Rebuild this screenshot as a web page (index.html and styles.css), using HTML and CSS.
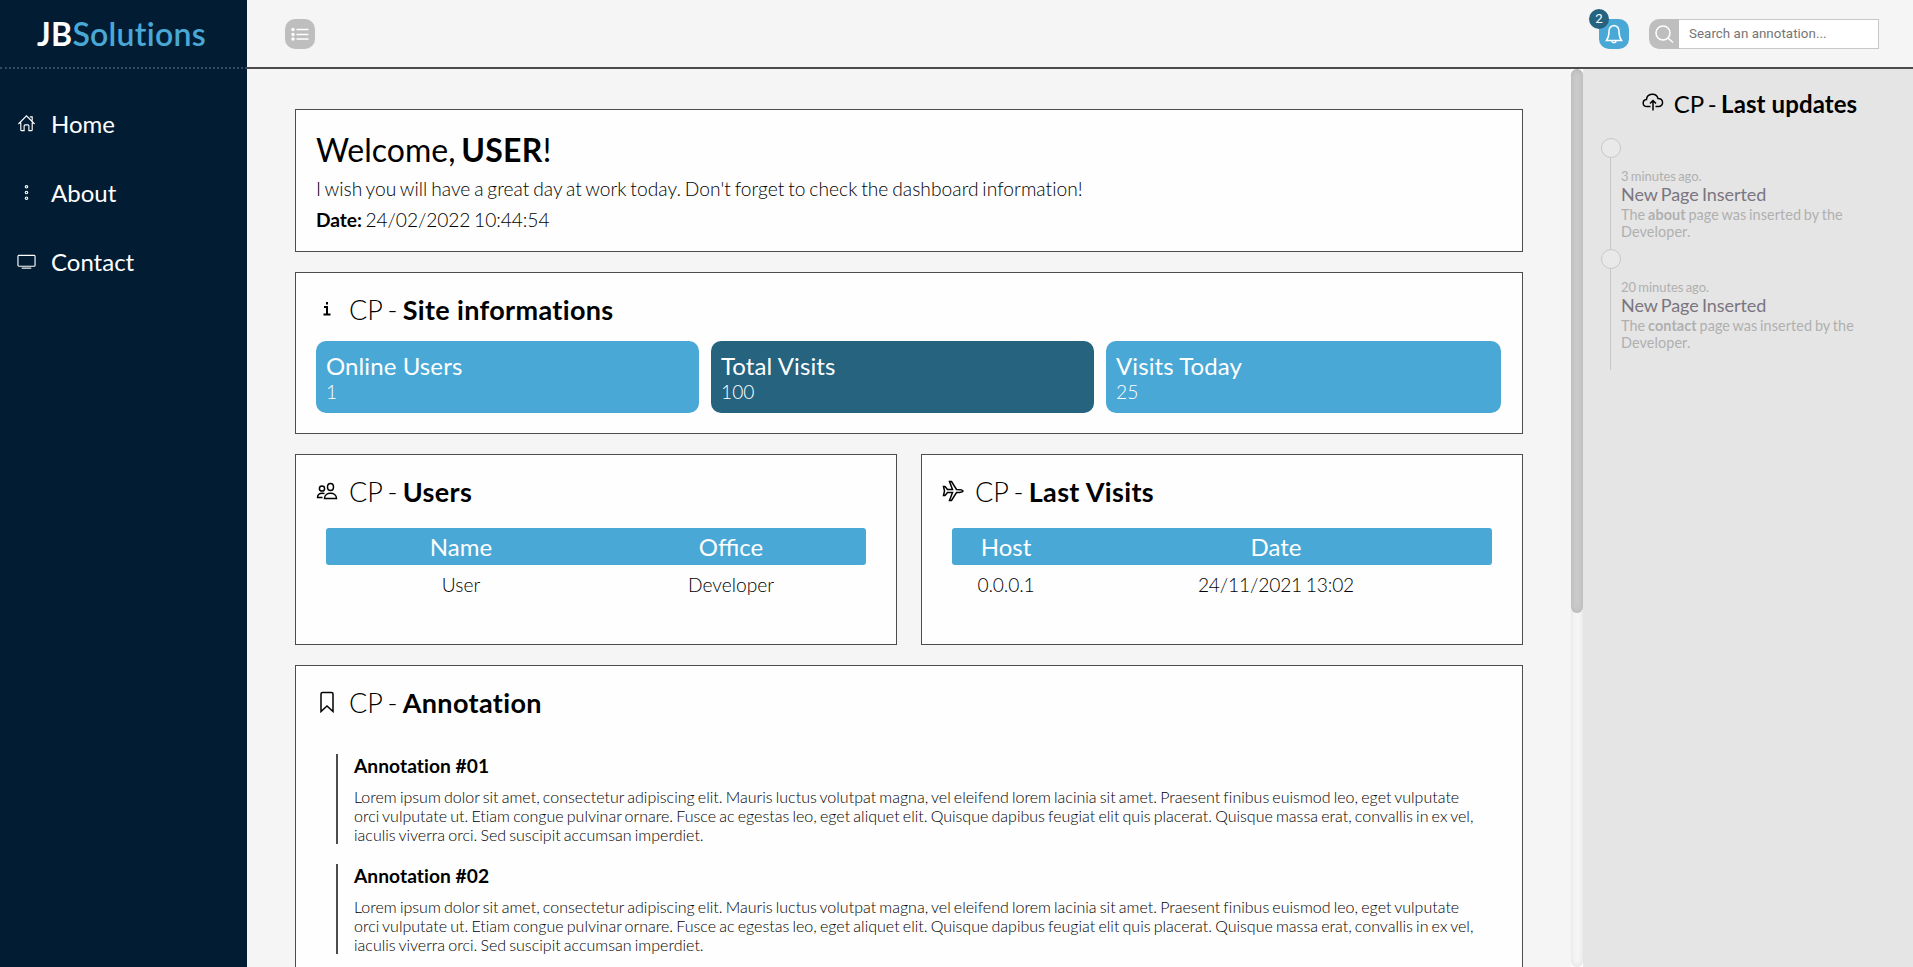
FILE: index.html
```html
<!DOCTYPE html>
<html lang="en">
<head>
<meta charset="utf-8">
<title>JBSolutions - Control Panel</title>
<link rel="stylesheet" href="styles.css">
</head>
<body>
<div class="app">
  <aside class="sidebar">
    <div class="logo"><b>JB</b><span>Solutions</span></div>
    <nav class="nav">
      <a class="nav-item"><svg class="nav-icon" viewBox="0 0 20 20"><path d="M1.500 10.500 10 2l8.500 8.500M4 9v7.500q0 1 1 1h2.500v-5q0-1 1-1h3q1 0 1 1v5H15q1 0 1-1V9M13.500 3H16v4"/></svg>Home</a>
      <a class="nav-item"><svg class="nav-icon" viewBox="0 0 20 20"><circle cx="10" cy="4" r="1.300"/><circle cx="10" cy="10" r="1.300"/><circle cx="10" cy="16" r="1.300"/></svg>About</a>
      <a class="nav-item"><svg class="nav-icon" viewBox="0 0 20 20"><rect x="1" y="3.500" width="18" height="11.500" rx="1"/><path d="M5 17h10"/></svg>Contact</a>
    </nav>
  </aside>
  <div class="page">
    <header class="topbar">
      <button class="square menu"><svg viewBox="0 0 30 30"><circle class="bullet" cx="8" cy="10.500" r="1"/><circle class="bullet" cx="8" cy="15.500" r="1"/><circle class="bullet" cx="8" cy="20" r="1"/><path d="M11.500 10.500h12M11.500 15.500h12M11.500 20h12"/></svg></button>
      <div class="tools">
        <button class="square bell"><svg viewBox="0 0 30 30"><path d="M15 6.500c-3.500.5-5 3-5 6 0 5-1 7-2.500 9h15c-1.500-2-2.500-4-2.500-9 0-3-1.500-5.500-5-6ZM12.800 22c.3 2.400 4.100 2.400 4.400 0"/></svg><span class="badge">2</span></button>
        <div class="search"><span class="search-icon"><svg viewBox="0 0 30 30"><circle cx="14" cy="14" r="7"/><path d="m19 19 5 4.500"/></svg></span><input class="search-input" type="text" placeholder="Search an annotation..."></div>
      </div>
    </header>
    <div class="body">
      <main class="content">
        <section class="card welcome">
          <h1>Welcome, <b>USER</b>!</h1>
          <p>I wish you will have a great day at work today. Don't forget to check the dashboard information!</p>
          <p><b>Date:</b> 24/02/2022 10:44:54</p>
        </section>
        <section class="card info">
          <h2><svg class="h-icon" viewBox="0 0 22 22"><path class="thick" d="M8 9h3v7.500M7.500 16.500h7M11 4v2.500"/></svg><span>CP - <b>Site informations</b></span></h2>
          <div class="stats">
            <div class="stat"><h3>Online Users</h3><p>1</p></div>
            <div class="stat dark"><h3>Total Visits</h3><p>100</p></div>
            <div class="stat last"><h3>Visits Today</h3><p>25</p></div>
          </div>
        </section>
        <div class="pair">
          <section class="card list">
            <h2><svg class="h-icon" viewBox="0 0 22 22"><ellipse cx="14.500" cy="7" rx="3" ry="3.500"/><path d="M8.500 18.500c0-7 12-7 12 0Z"/><circle cx="6" cy="8.500" r="2.600"/><path d="M8.500 13.500C4 12.500 1.500 14 1.500 17.500h5"/></svg><span>CP - <b>Users</b></span></h2>
            <div class="table">
              <div class="row head"><span>Name</span><span>Office</span></div>
              <div class="row"><span>User</span><span>Developer</span></div>
            </div>
          </section>
          <section class="card list visits">
            <h2><svg class="h-icon" viewBox="0 0 22 22"><path class="plane" d="M1.500 6.500h1.500l2.500 3h5L7.500 1.500h2l5 8c3 0 6 0 6.500 1.500-.5 1.500-3.500 1.500-6.500 1.500l-5 8h-2l3-8h-5L3 15.500H1.500L2.500 11Z"/></svg><span>CP - <b>Last Visits</b></span></h2>
            <div class="table">
              <div class="row head"><span>Host</span><span>Date</span></div>
              <div class="row"><span>0.0.0.1</span><span>24/11/2021 13:02</span></div>
            </div>
          </section>
        </div>
        <section class="card notes">
          <h2><svg class="h-icon" viewBox="0 0 22 22"><path d="M5 20.500V3q0-1.500 1.500-1.500h9Q17 1.500 17 3v17.500l-6-5.500Z"/></svg><span>CP - <b>Annotation</b></span></h2>
          <article class="note"><h3>Annotation #01</h3><p>Lorem ipsum dolor sit amet, consectetur adipiscing elit. Mauris luctus volutpat magna, vel eleifend lorem lacinia sit amet. Praesent finibus euismod leo, eget vulputate orci vulputate ut. Etiam congue pulvinar ornare. Fusce ac egestas leo, eget aliquet elit. Quisque dapibus feugiat elit quis placerat. Quisque massa erat, convallis in ex vel, iaculis viverra orci. Sed suscipit accumsan imperdiet.</p></article>
          <article class="note"><h3>Annotation #02</h3><p>Lorem ipsum dolor sit amet, consectetur adipiscing elit. Mauris luctus volutpat magna, vel eleifend lorem lacinia sit amet. Praesent finibus euismod leo, eget vulputate orci vulputate ut. Etiam congue pulvinar ornare. Fusce ac egestas leo, eget aliquet elit. Quisque dapibus feugiat elit quis placerat. Quisque massa erat, convallis in ex vel, iaculis viverra orci. Sed suscipit accumsan imperdiet.</p></article>
        </section>
      </main>
      <div class="scrollbar"><div class="thumb"></div></div>
      <aside class="updates">
        <h2><svg class="h-icon" viewBox="0 0 22 22"><path d="M8.500 14.500H5c-5 0-5-6.500-.5-7C5 1 14.500.5 16 6.500c6 0 6 8 .5 8h-3M11 18.500V8.500M8 11.500l3-3 3 3"/></svg><span>CP - <b>Last updates</b></span></h2>
        <div class="timeline">
          <div class="event"><span class="dot"></span><small>3 minutes ago.</small><h3>New Page Inserted</h3><p>The <b>about</b> page was inserted by the Developer.</p></div>
          <div class="event"><span class="dot"></span><small>20 minutes ago.</small><h3>New Page Inserted</h3><p>The <b>contact</b> page was inserted by the Developer.</p></div>
        </div>
      </aside>
    </div>
  </div>
</div>
</body>
</html>
```
FILE: styles.css
```css
* { margin: 0; padding: 0; box-sizing: border-box; }
body { font-family: Lato, sans-serif; color: #000; overflow: hidden; font-variant-ligatures: none; }
svg { fill: none; stroke: currentColor; stroke-width: 1.2; display: block; }
h1, h2, p, small, .event h3, .row { word-spacing: -.075em; }
.app { display: flex; height: 967px; }
.sidebar { width: 247px; background: #021d33; color: #fff; flex: none; }
.logo { height: 69px; border-bottom: 2px dotted #34495e; font-size: 32px; line-height: 67px; text-align: center; padding-right: 4px; letter-spacing: .25px; }
.logo span { color: #49a8d6; font-weight: 600; }
.nav { padding-top: 20px; }
.nav-item { display: flex; align-items: center; height: 69px; padding-left: 17px; font-size: 24px; gap: 15px; }
.nav-icon { width: 19px; height: 19px; margin-top: -1px; }
.page { flex: 1; display: flex; flex-direction: column; min-width: 0; }
.topbar { height: 69px; flex: none; background: #f5f5f5; border-bottom: 2px solid #4c4c4c; display: flex; justify-content: space-between; align-items: center; padding: 0 34px 0 38px; }
.topbar svg { stroke-width: 1.5; }
.square { position: relative; width: 30px; height: 30px; border: 0; border-radius: 10px; color: #fff; background: #bebebe; }
.square.bell { background: #49a8d6; }
.bullet { fill: currentColor; }
.badge { position: absolute; left: -10px; top: -10px; width: 20px; height: 20px; border-radius: 50%; background: #25637f; font: 13.33px/20px Roboto, sans-serif; }
.tools { display: flex; gap: 20px; }
.search { display: flex; width: 230px; height: 30px; }
.search-icon { width: 30px; background: #bebebe; color: #fff; border-radius: 10px 0 0 10px; }
.search-input { flex: 1; min-width: 0; border: 1px solid #c8c8c8; border-left: 0; background: #fff; padding: 0 10px; font: 13.33px Roboto, sans-serif; letter-spacing: .05px; }
.search-input::placeholder { color: #757575; }
.body { flex: 1; display: flex; min-height: 0; }
.content { flex: 1; min-width: 0; background: #f5f5f5; padding: 40px 48px 0; display: flex; flex-direction: column; gap: 20px; overflow: hidden; }
.card { background: #fefefe; border: 1px solid #4c4c4c; padding: 20px; flex: none; }
.welcome { height: 143px; }
.welcome h1 { font-size: 32px; font-weight: 400; line-height: 40px; }
.welcome h1 b { letter-spacing: .3px; }
.welcome p { font-size: 19.2px; font-weight: 300; line-height: 23px; margin-top: 8px; }
.welcome h1 + p { margin-top: 7px; letter-spacing: .04px; }
.welcome p:last-child { letter-spacing: -.08px; }
h2 { display: flex; align-items: center; gap: 11px; font-size: 27px; font-weight: 300; line-height: 34px; }
b { font-weight: 700; }
h2 b { letter-spacing: .35px; word-spacing: 0; }
.h-icon { width: 22px; height: 22px; margin-top: -3px; flex: none; stroke-width: 1.5; }
.thick { stroke-width: 2; }
.info { height: 162px; }
.stats { display: flex; gap: 12px; margin-top: 14px; padding-right: 1px; }
.stat { width: 383px; height: 72px; border-radius: 10px; background: #49a8d6; color: #fff; padding: 10px; }
.stat.dark { background: #25637f; }
.stat.last { flex: 1; }
.stat h3 { font-size: 24px; font-weight: 400; line-height: 29px; letter-spacing: .1px; }
.stat p { font-size: 19.2px; font-weight: 300; line-height: 23px; }
.pair { display: flex; gap: 24px; }
.list { flex: 1; height: 191px; }
.table { margin: 19px 10px 0; width: 540px; }
.row { display: grid; grid-template-columns: 1fr 1fr; text-align: center; font-size: 19.2px; font-weight: 300; line-height: 40px; }
.visits .row { grid-template-columns: 20% 80%; letter-spacing: -.15px; }
.visits .row.head { letter-spacing: 0; }
.row.head { background: #49a8d6; color: #fff; font-size: 24px; font-weight: 400; line-height: 37px; border-radius: 3px; font-variant-ligatures: normal; }
.notes { height: 420px; }
.note { margin: 20px 20px 0; padding-left: 16px; border-left: 2px solid #4c4c4c; height: 90px; }
.notes h2 + .note { margin-top: 34px; }
.note h3 { font-size: 19.2px; line-height: 24px; letter-spacing: .05px; }
.note p { font-size: 16px; font-weight: 300; line-height: 19px; margin-top: 9px; letter-spacing: .01px; }
.scrollbar { width: 12px; background: #f5f5f5; border-radius: 10px; box-shadow: inset 0 0 5px #ddd; }
.thumb { height: 544px; border-radius: 10px; background: #cbcbcb; box-shadow: inset 0 0 6px rgba(0, 0, 0, .12); }
.updates { width: 330px; background: #e5e5e5; padding: 18px 17px 0 20px; }
.updates h2 { font-size: 24px; font-weight: 400; justify-content: center; gap: 10px; }
.updates h2 b { letter-spacing: .1px; }
.timeline { margin: 18px 0 0 7px; border-left: 1px solid #c8c8c8; height: 231px; }
.event { position: relative; height: 111px; padding: 29px 25px 0 10px; color: #b0b0b0; }
.dot { position: absolute; left: -10px; top: -1px; width: 20px; height: 20px; border-radius: 50%; border: 1px solid #c8c8c8; background: #e9e9e9; }
.event small { display: block; font-size: 13px; line-height: 16px; letter-spacing: -.05px; }
.event h3 { font-size: 18px; font-weight: 400; line-height: 21px; padding-bottom: 1px; color: #7a7580; letter-spacing: -.05px; }
.event p { font-size: 14.4px; line-height: 17px; letter-spacing: .1px; }
```
